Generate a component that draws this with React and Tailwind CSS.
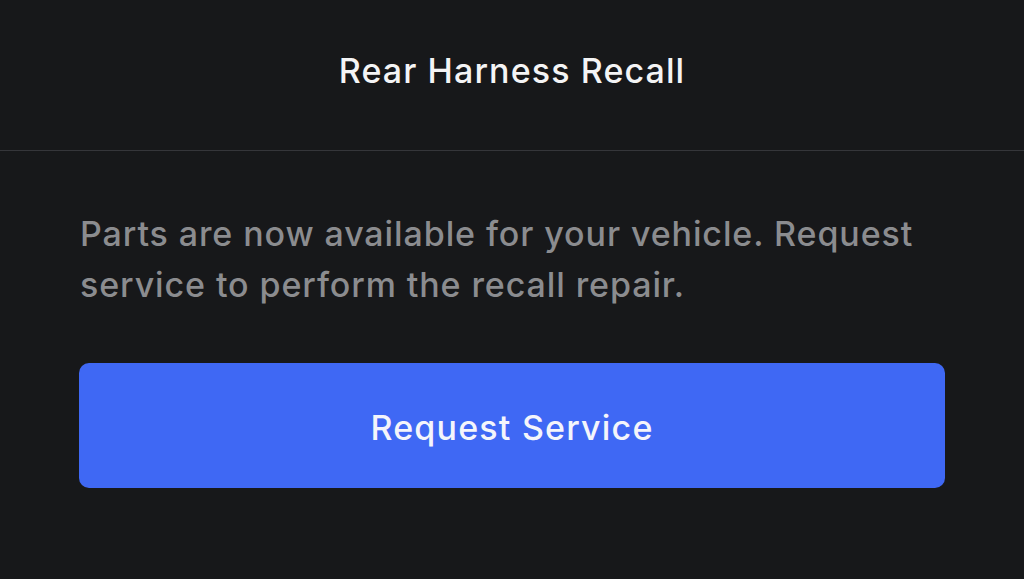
export default function App() {
  return (
    <div className="w-[1024px] h-[579px] bg-[#17181a] overflow-hidden" style={{ fontFamily: "Inter, 'Noto Sans', sans-serif" }}>
      <div className="h-[151px] flex items-center justify-center border-b border-[#35363a] pb-[10px]">
        <h1 className="text-[34px] font-medium text-[#f4f4f5] tracking-[1.1px]">Rear Harness Recall</h1>
      </div>
      <div className="px-[80px] pt-[57px]">
        <p className="text-[34px] leading-[51px] font-medium text-[#8b8c8f] tracking-[0.9px]">
          Parts are now available for your vehicle. Request service to perform the recall repair.
        </p>
        <button className="mt-[53px] w-[866px] h-[125px] -ml-px rounded-[10px] bg-[#3f68f4] text-[34px] font-medium text-[#f4f5fb] tracking-[1.2px] flex items-center justify-center pt-[3px]">
          Request Service
        </button>
      </div>
    </div>
  );
}
